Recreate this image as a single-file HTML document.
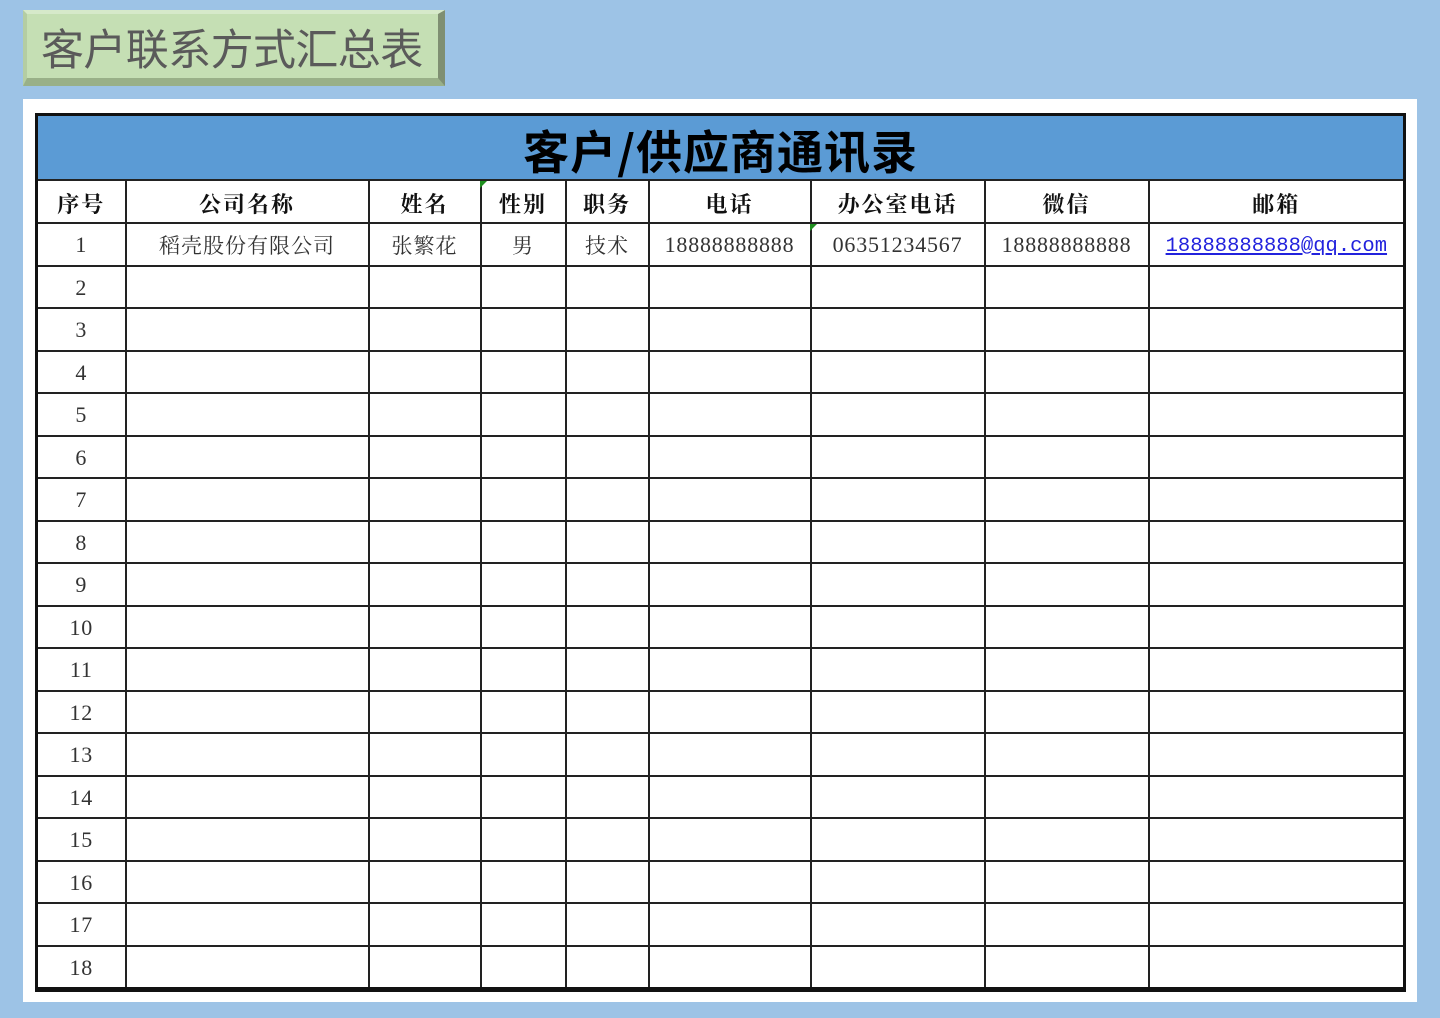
<!DOCTYPE html>
<html><head><meta charset="utf-8"><style>
body{margin:0;width:1440px;height:1018px;background:#9dc3e6;position:relative;overflow:hidden;font-family:"Liberation Serif","Noto Serif CJK SC",serif;}
.tb{position:absolute;left:23px;top:10px;width:422px;height:76px;background:#c5dfb4;box-sizing:border-box;border-style:solid;border-width:4px 7px 8px 4px;border-color:#d6e9ca #7f8f72 #99b088 #b4cda3;}
.tb span{position:absolute;left:14px;top:3px;font-family:"Noto Sans CJK SC",sans-serif;font-size:43px;color:#5a5a5a;letter-spacing:-0.6px;line-height:60px;}
.panel{position:absolute;left:23px;top:99px;width:1394px;height:903px;background:#fff;}
table{position:absolute;left:35px;top:113px;width:1368px;border-collapse:collapse;table-layout:fixed;border:3px solid #111;border-bottom:5px solid #111;}
td{border:2px solid #222;text-align:center;padding:2px 0 0 0;font-size:22px;color:#333;height:38.5px;line-height:20px;letter-spacing:0.8px;}
tr.t td{background:#5b9bd5;height:59px;padding-top:4px;font-family:"Noto Sans CJK SC",sans-serif;font-weight:bold;font-size:46px;line-height:46px;color:#000;border-bottom:2px solid #222;letter-spacing:1px;}
tr.h td{font-family:"Noto Serif CJK SC",serif;font-weight:bold;font-size:22px;color:#111;height:37px;padding-top:4px;letter-spacing:2px;}
td.c{font-family:"Noto Serif CJK SC",serif;font-size:21px;letter-spacing:1px;}
a{color:#2222dd;text-decoration:underline;font-family:"Liberation Mono",monospace;font-size:20.5px;letter-spacing:0;}
.g{position:absolute;width:0;height:0;border-top:7px solid #1f8f1f;border-right:7px solid transparent;}
</style></head><body>
<div class="tb"><span>客户联系方式汇总表</span></div>
<div class="panel"></div>
<table>
<colgroup><col style="width:89px"><col style="width:243px"><col style="width:112px"><col style="width:85px"><col style="width:83px"><col style="width:162px"><col style="width:174px"><col style="width:164px"><col style="width:256px"></colgroup>
<tr class="t"><td colspan="9">客户/供应商通讯录</td></tr>
<tr class="h"><td>序号</td><td>公司名称</td><td>姓名</td><td>性别</td><td>职务</td><td>电话</td><td>办公室电话</td><td>微信</td><td>邮箱</td></tr>
<tr><td>1</td><td class="c">稻壳股份有限公司</td><td class="c">张繁花</td><td class="c">男</td><td class="c">技术</td><td>18888888888</td><td>06351234567</td><td>18888888888</td><td><a>18888888888@qq.com</a></td></tr>
<tr><td>2</td><td></td><td></td><td></td><td></td><td></td><td></td><td></td><td></td></tr>
<tr><td>3</td><td></td><td></td><td></td><td></td><td></td><td></td><td></td><td></td></tr>
<tr><td>4</td><td></td><td></td><td></td><td></td><td></td><td></td><td></td><td></td></tr>
<tr><td>5</td><td></td><td></td><td></td><td></td><td></td><td></td><td></td><td></td></tr>
<tr><td>6</td><td></td><td></td><td></td><td></td><td></td><td></td><td></td><td></td></tr>
<tr><td>7</td><td></td><td></td><td></td><td></td><td></td><td></td><td></td><td></td></tr>
<tr><td>8</td><td></td><td></td><td></td><td></td><td></td><td></td><td></td><td></td></tr>
<tr><td>9</td><td></td><td></td><td></td><td></td><td></td><td></td><td></td><td></td></tr>
<tr><td>10</td><td></td><td></td><td></td><td></td><td></td><td></td><td></td><td></td></tr>
<tr><td>11</td><td></td><td></td><td></td><td></td><td></td><td></td><td></td><td></td></tr>
<tr><td>12</td><td></td><td></td><td></td><td></td><td></td><td></td><td></td><td></td></tr>
<tr><td>13</td><td></td><td></td><td></td><td></td><td></td><td></td><td></td><td></td></tr>
<tr><td>14</td><td></td><td></td><td></td><td></td><td></td><td></td><td></td><td></td></tr>
<tr><td>15</td><td></td><td></td><td></td><td></td><td></td><td></td><td></td><td></td></tr>
<tr><td>16</td><td></td><td></td><td></td><td></td><td></td><td></td><td></td><td></td></tr>
<tr><td>17</td><td></td><td></td><td></td><td></td><td></td><td></td><td></td><td></td></tr>
<tr><td>18</td><td></td><td></td><td></td><td></td><td></td><td></td><td></td><td></td></tr>
</table>
<div class="g" style="left:480px;top:181px"></div>
<div class="g" style="left:810px;top:224px"></div>
</body></html>
